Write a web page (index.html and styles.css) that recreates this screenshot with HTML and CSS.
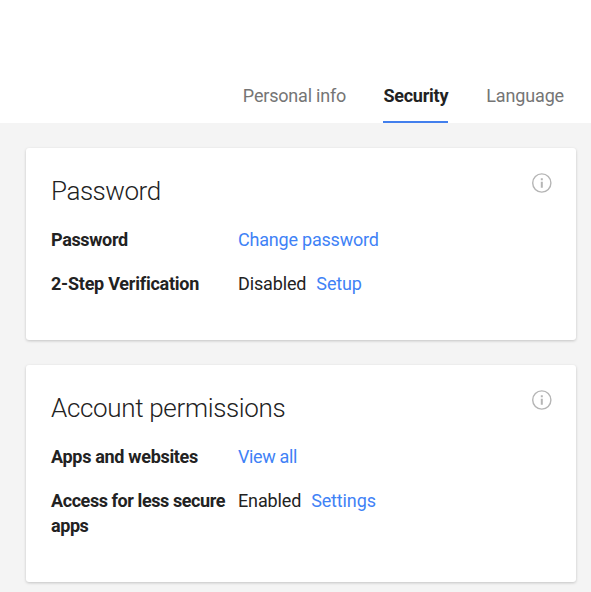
FILE: index.html
```html
<!DOCTYPE html>
<html lang="en">
<head>
<meta charset="utf-8">
<title>Security</title>
<link rel="stylesheet" href="styles.css">
</head>
<body>
<header class="header">
  <nav class="tabs">
    <a class="tab tab-info">Personal info</a>
    <a class="tab active">Security</a>
    <a class="tab tab-lang">Language</a>
  </nav>
</header>
<main class="content">
  <section class="card">
    <div class="card-head">
      <h2 class="title title-password">Password</h2>
      <svg class="info" viewBox="0 0 20 20"><circle cx="9.8" cy="10" r="9.1"/><path d="M9.8 8.8v6M9.8 5.2v2"/></svg>
    </div>
    <dl class="rows">
      <dt><span class="label-password">Password</span></dt><dd><a class="link-change">Change password</a></dd>
      <dt><span class="label-step">2-Step Verification</span></dt><dd><span>Disabled</span><a>Setup</a></dd>
    </dl>
  </section>
  <section class="card permissions">
    <div class="card-head">
      <h2 class="title title-account">Account permissions</h2>
      <svg class="info" viewBox="0 0 20 20"><circle cx="9.8" cy="10" r="9.1"/><path d="M9.8 8.8v6M9.8 5.2v2"/></svg>
    </div>
    <dl class="rows">
      <dt><span class="label-apps">Apps and websites</span></dt><dd><a class="link-view">View all</a></dd>
      <dt><span class="label-access">Access for less secure<br>apps</span></dt><dd><span>Enabled</span><a>Settings</a></dd>
    </dl>
  </section>
</main>
</body>
</html>
```

FILE: styles.css
```css
* { box-sizing: border-box; }
body { margin: 0; height: 592px; overflow: hidden; background: #f4f4f4; color: #222; font: 18px/25px Roboto, sans-serif; }
.header { height: 123px; padding: 83px 27px 0 0; background: #fff; }
.tabs { display: flex; justify-content: flex-end; gap: 38px; height: 40px; }
.tab { color: #757575; white-space: nowrap; letter-spacing: -.2px; }
.tab-info { margin-right: -.7px; }
.tab-lang { letter-spacing: -.14px; }
.active { color: #222; font-weight: 700; letter-spacing: -.25px; border-bottom: 2px solid #427fed; }
.content { padding: 25px 15px 0 26px; }
.card { height: 192px; margin-bottom: 25px; padding: 25px 24px 0 25px; background: #fff; border-radius: 3px; box-shadow: 0 1px 3px rgba(0,0,0,.2); }
.permissions { height: 217px; }
.card-head { display: flex; justify-content: space-between; height: 54px; }
.title { margin: 0; font-size: 26px; line-height: 36px; font-weight: 300; }
.title-password { letter-spacing: -.46px; }
.title-account { letter-spacing: -.33px; }
.info { width: 20px; height: 20px; fill: none; stroke: #b5b5b5; stroke-width: 1.4; }
.info path { stroke-width: 2; }
.rows { display: grid; grid-template-columns: 187px 1fr; row-gap: 19px; margin: 0; }
dt { font-weight: 700; white-space: nowrap; }
.label-password { letter-spacing: -.35px; }
.label-step { letter-spacing: -.24px; }
.label-apps { letter-spacing: -.31px; }
.label-access { letter-spacing: -.42px; }
dd { display: flex; gap: 10px; margin: 0; letter-spacing: -.14px; }
.link-change { letter-spacing: -.21px; }
.link-view { letter-spacing: -.36px; }
dd a { color: #3f82f6; }
```
